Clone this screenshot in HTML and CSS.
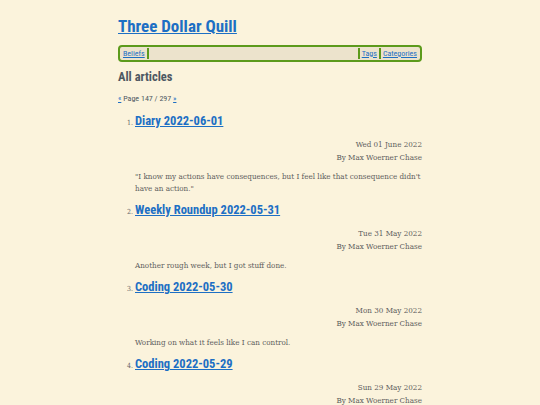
FILE: index.html
```html
<!DOCTYPE html>
<html lang="en">
<head>
  <meta charset="UTF-8">
  <meta name="viewport" content="width=device-width, initial-scale=1.0">
  <title>All articles - Three Dollar Quill</title>
  <link rel="stylesheet" href="styles.css">
</head>
<body>
  <div class="page">
    <header class="site-header">
      <h1 class="site-title"><a href="#">Three Dollar Quill</a></h1>
      <nav class="site-nav">
        <a href="#">Beliefs</a>
        <span class="nav-fill"></span>
        <a href="#">Tags</a>
        <a href="#">Categories</a>
      </nav>
    </header>

    <main>
      <h2 class="section-title">All articles</h2>
      <p class="pager"><a href="#">«</a> Page 147 / 297 <a href="#">»</a></p>

      <ol class="articles" start="1">
        <li>
          <h3 class="article-title"><a href="#">Diary 2022-06-01</a></h3>
          <div class="meta">
            <div>Wed 01 June 2022</div>
            <div>By Max Woerner Chase</div>
          </div>
          <p class="summary">"I know my actions have consequences, but I feel like that consequence didn't have an action."</p>
        </li>
        <li>
          <h3 class="article-title"><a href="#">Weekly Roundup 2022-05-31</a></h3>
          <div class="meta">
            <div>Tue 31 May 2022</div>
            <div>By Max Woerner Chase</div>
          </div>
          <p class="summary">Another rough week, but I got stuff done.</p>
        </li>
        <li>
          <h3 class="article-title"><a href="#">Coding 2022-05-30</a></h3>
          <div class="meta">
            <div>Mon 30 May 2022</div>
            <div>By Max Woerner Chase</div>
          </div>
          <p class="summary">Working on what it feels like I can control.</p>
        </li>
        <li>
          <h3 class="article-title"><a href="#">Coding 2022-05-29</a></h3>
          <div class="meta">
            <div>Sun 29 May 2022</div>
            <div>By Max Woerner Chase</div>
          </div>
          <p class="summary">Wrapping up the weekend.</p>
        </li>
      </ol>
    </main>
  </div>
</body>
</html>
```

FILE: styles.css
```css
html, body {
  margin: 0;
  padding: 0;
  background: #fbf3dc;
  color: #4a4a48;
  font-family: "DejaVu Serif", serif;
  font-stretch: condensed;
}
a { color: #1d6fc4; }

.page {
  width: 304px;
  margin: 0 auto;
  padding-top: 14px;
}

.site-title {
  margin: 0;
  font-family: Roboto, sans-serif;
  font-size: 17px;
  line-height: 24px;
  font-weight: 700;
}

.site-nav {
  margin-top: 7px;
  display: flex;
  align-items: center;
  border: 2px solid #5c9a1c;
  border-radius: 4px;
  background: #ece3cc;
  padding: 1px 1px;
  font-family: Roboto, sans-serif;
  font-size: 8px;
  line-height: 11px;
}
.site-nav a {
  padding: 0 2px;
  border-right: 2px solid #5c9a1c;
}
.site-nav a:last-child { border-right: none; }
.nav-fill {
  flex: 1;
  align-self: stretch;
  border-right: 2px solid #5c9a1c;
}

.section-title {
  margin: 6px 0 0;
  font-family: Roboto, sans-serif;
  font-size: 12.5px;
  line-height: 18px;
  color: #4d5862;
}

.pager {
  margin: 8px 0 0;
  font-family: Roboto, sans-serif;
  font-size: 8px;
  color: #4d5862;
}

.articles {
  margin: 9px 0 0;
  padding-left: 17px;
  font-size: 7px;
}
.articles li { color: #66666a; }

.article-title {
  margin: 0;
  font-family: Roboto, sans-serif;
  font-size: 12.5px;
  line-height: 18px;
  font-weight: 700;
}

.meta {
  margin-top: 8px;
  text-align: right;
  font-size: 8px;
  line-height: 13px;
  color: #5d5d5d;
}

.summary {
  margin: 7px 0 6px;
  font-size: 8px;
  line-height: 12px;
  color: #5d5d5d;
}
```
